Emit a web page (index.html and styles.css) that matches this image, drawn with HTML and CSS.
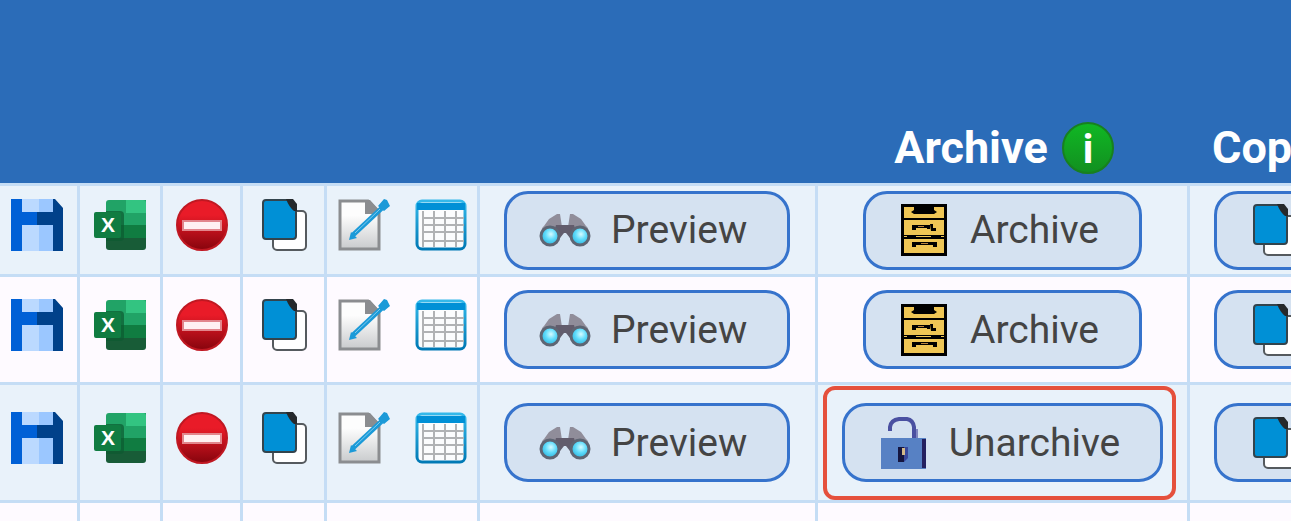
FILE: index.html
```html
<!DOCTYPE html>
<html lang="en">
  <head>
    <meta charset="UTF-8" />
    <meta name="viewport" content="width=device-width, initial-scale=1.0" />
    <title>Archive</title>
    <link rel="stylesheet" href="styles.css">
  </head>
  <body>
    <svg class="icon-defs" aria-hidden="true">
      <defs>
        <linearGradient id="redFill" x1="0" y1="0" x2="0" y2="1">
          <stop offset="0.3" stop-color="#e91b28" />
          <stop offset="1" stop-color="#86040d" />
        </linearGradient>
        <linearGradient id="greenFill" x1="0" y1="0" x2="0" y2="1">
          <stop offset="0" stop-color="#10b824" />
          <stop offset="1" stop-color="#128f20" />
        </linearGradient>
        <linearGradient id="paperFill" x1="0" y1="0" x2="0" y2="1">
          <stop offset="0.3" stop-color="#fdfdfd" />
          <stop offset="1" stop-color="#c9cbcd" />
        </linearGradient>
        <linearGradient id="calendarFill" x1="0" y1="0" x2="0" y2="1">
          <stop offset="0" stop-color="#35b9ea" />
          <stop offset="1" stop-color="#0079b5" />
        </linearGradient>
        <radialGradient id="lensFill" cx="0.55" cy="0.4" r="0.6">
          <stop offset="0" stop-color="#d5fbff" />
          <stop offset="0.5" stop-color="#5fdcfb" />
          <stop offset="1" stop-color="#2fb4dd" />
        </radialGradient>
      </defs>

      <symbol id="save" viewBox="0 0 52 52">
        <path fill="#bbd9ff" d="M11 0h17v52H11z" />
        <path fill="#9bc7ff" d="M28 0h15v52H28z" />
        <path fill="#0060d6" d="M0 0h11v13h15v13H11v26H0z" />
        <path fill="#00418a" d="M26 13h16V0h2l8 9v43H42V26H26z" />
      </symbol>

      <symbol id="excel" viewBox="0 0 52 52">
        <path fill="#21a366" d="M15 1h37v26H12V4q0-3 3-3z" />
        <path fill="#33c481" d="M32 1h17q3 0 3 3v10H32z" />
        <path fill="#107c41" d="M12 26h40v13H12z" />
        <path fill="#185c37" d="M12 39h40v9q0 3-3 3H15q-3 0-3-3z" />
        <path fill="#0d5a30" opacity="0.7" d="M12 12h14q4 0 4 4v22q0 4-4 4H12z" />
        <rect x="0" y="13" width="27" height="26" rx="2" fill="#107c41" />
        <text x="14" y="33" class="excel-letter">X</text>
      </symbol>

      <symbol id="stop" viewBox="0 0 52 52">
        <circle cx="26" cy="26" r="25" fill="url(#redFill)" stroke="#c01822" stroke-width="2" />
        <rect x="7" y="22" width="38" height="9" fill="#fff1f2" stroke="#e2868c" stroke-width="2" />
      </symbol>

      <symbol id="copy" viewBox="0 0 52 52">
        <rect x="15" y="12" width="33" height="39" rx="4" fill="#fff" stroke="#555a5e" stroke-width="2" />
        <path fill="#0090d6" stroke="#33444d" stroke-width="2" d="M8 1h23l7 9v27q0 3-3 3H8q-3 0-3-3V4q0-3 3-3z" />
        <path fill="#25292c" d="M28 0h7l4 5v7h-3q-5-4-8-12z" />
      </symbol>

      <symbol id="edit" viewBox="0 0 52 52">
        <path fill="url(#paperFill)" stroke="#8b8d90" stroke-width="3" d="M2 2h28l11 11v37H2z" />
        <path fill="#8b8d90" d="M27 1h5l10 11v3H27z" />
        <path fill="none" stroke="#1b9ad8" stroke-width="5" d="M15 36L45 8" />
        <path fill="#1b9ad8" d="M11 41l2-8 6 6zM46 0l3 1 3 6-6 5-6-5z" />
        <path stroke="#7fcbee" stroke-width="1" d="M17 34L42 10" />
      </symbol>

      <symbol id="calendar" viewBox="0 0 52 52">
        <rect x="2" y="2" width="48" height="48" rx="5" fill="#fbfcfd" stroke="url(#calendarFill)" stroke-width="3" />
        <path fill="#0090d6" d="M2 4h48v7H2z" />
        <path fill="none" stroke="#b0b2b4" stroke-width="2" d="M8 12v36M19 12v36M30 12v36M41 12v36M9 19h40M9 26h40M9 33h40M9 42h40" />
      </symbol>

      <symbol id="binoculars" viewBox="0 0 52 52">
        <path fill="#908d9a" d="M10 15l8-5h3l2 13v8H2q0-7 3-9zM42 15l-8-5h-3l-2 13v8h21q0-7-3-9z" />
        <path fill="#625c6c" d="M17 21h18l4 13h-8l-4-5h-2l-4 5h-8z" />
        <circle cx="11" cy="32" r="9" fill="url(#lensFill)" stroke="#5e6573" stroke-width="3" />
        <circle cx="41" cy="32" r="9" fill="url(#lensFill)" stroke="#5e6573" stroke-width="3" />
      </symbol>

      <symbol id="cabinet" viewBox="0 0 52 52">
        <path fill="#000" d="M3 0h46v52H3z" />
        <path fill="#efc655" d="M6 3h10v3l-3 2 3 2h20l3-2-3-2V3h10v11H6zM6 16h40v15H6zM6 35h40v14H6z" />
        <path fill="#000" d="M14 21h18v4h-3v-1H18v2h-4zM32 20h3v4h3v3h-5zM14 38h25v5h-4v-2H18v2h-4z" />
        <path fill="#efc655" d="M6 32h3v1H6zM18 32h15v1H18zM43 32h3v1h-3z" />
        <path fill="#b98540" d="M20 22h6v1h-6zM23 39h7v1h-7z" />
      </symbol>

      <symbol id="unlock" viewBox="0 0 52 52">
        <path fill="none" stroke="#4a50a1" stroke-width="4" d="M13 14v-4q1-7 9-8h8q6 1 7 8v12" />
        <path stroke="#7f85bf" stroke-width="2" d="M40 12v10" />
        <path fill="#5781c4" d="M4 21h45v31H4z" />
        <path fill="#24205f" d="M45 22h4v29h-4z" />
        <path fill="#151640" d="M21 30h6v15h-6z" />
        <path fill="#37479c" d="M27 30h4v11l-4 4z" />
        <path fill="#d2b98a" d="M25 31h3v7h-3z" />
      </symbol>

      <symbol id="info" viewBox="0 0 52 52">
        <circle cx="26" cy="26" r="25" fill="url(#greenFill)" stroke="#18801f" stroke-width="2" />
        <text x="26" y="41" class="info-letter">i</text>
      </symbol>
    </svg>

    <table class="reports">
      <colgroup>
        <col class="col-save" />
        <col class="col-excel" />
        <col class="col-delete" />
        <col class="col-copy" />
        <col class="col-edit" />
        <col class="col-preview" />
        <col class="col-archive" />
        <col />
      </colgroup>
      <thead>
        <tr>
          <th></th>
          <th></th>
          <th></th>
          <th></th>
          <th></th>
          <th></th>
          <th>
            <span class="heading">Archive <svg class="icon"><use href="#info" /></svg></span>
          </th>
          <th class="start">Copy</th>
        </tr>
      </thead>
      <tbody>
        <tr class="row-first">
          <td class="tools first"><button class="tool" aria-label="Save"><svg class="icon"><use href="#save" /></svg></button></td>
          <td class="tools"><button class="tool" aria-label="Excel"><svg class="icon"><use href="#excel" /></svg></button></td>
          <td class="tools"><button class="tool" aria-label="Delete"><svg class="icon"><use href="#stop" /></svg></button></td>
          <td class="tools"><button class="tool" aria-label="Copy"><svg class="icon"><use href="#copy" /></svg></button></td>
          <td class="tools">
            <div class="tool-group">
              <button class="tool" aria-label="Edit"><svg class="icon"><use href="#edit" /></svg></button>
              <button class="tool" aria-label="Schedule"><svg class="icon"><use href="#calendar" /></svg></button>
            </div>
          </td>
          <td class="start"><button class="btn"><svg class="icon"><use href="#binoculars" /></svg>Preview</button></td>
          <td><button class="btn"><svg class="icon"><use href="#cabinet" /></svg>Archive</button></td>
          <td class="start"><button class="btn"><svg class="icon"><use href="#copy" /></svg>Copy</button></td>
        </tr>
        <tr class="row-second">
          <td class="tools first"><button class="tool" aria-label="Save"><svg class="icon"><use href="#save" /></svg></button></td>
          <td class="tools"><button class="tool" aria-label="Excel"><svg class="icon"><use href="#excel" /></svg></button></td>
          <td class="tools"><button class="tool" aria-label="Delete"><svg class="icon"><use href="#stop" /></svg></button></td>
          <td class="tools"><button class="tool" aria-label="Copy"><svg class="icon"><use href="#copy" /></svg></button></td>
          <td class="tools">
            <div class="tool-group">
              <button class="tool" aria-label="Edit"><svg class="icon"><use href="#edit" /></svg></button>
              <button class="tool" aria-label="Schedule"><svg class="icon"><use href="#calendar" /></svg></button>
            </div>
          </td>
          <td class="start"><button class="btn"><svg class="icon"><use href="#binoculars" /></svg>Preview</button></td>
          <td><button class="btn"><svg class="icon"><use href="#cabinet" /></svg>Archive</button></td>
          <td class="start"><button class="btn"><svg class="icon"><use href="#copy" /></svg>Copy</button></td>
        </tr>
        <tr class="row-third">
          <td class="tools first"><button class="tool" aria-label="Save"><svg class="icon"><use href="#save" /></svg></button></td>
          <td class="tools"><button class="tool" aria-label="Excel"><svg class="icon"><use href="#excel" /></svg></button></td>
          <td class="tools"><button class="tool" aria-label="Delete"><svg class="icon"><use href="#stop" /></svg></button></td>
          <td class="tools"><button class="tool" aria-label="Copy"><svg class="icon"><use href="#copy" /></svg></button></td>
          <td class="tools">
            <div class="tool-group">
              <button class="tool" aria-label="Edit"><svg class="icon"><use href="#edit" /></svg></button>
              <button class="tool" aria-label="Schedule"><svg class="icon"><use href="#calendar" /></svg></button>
            </div>
          </td>
          <td class="start"><button class="btn"><svg class="icon"><use href="#binoculars" /></svg>Preview</button></td>
          <td class="highlight"><button class="btn"><svg class="icon"><use href="#unlock" /></svg>Unarchive</button></td>
          <td class="start"><button class="btn"><svg class="icon"><use href="#copy" /></svg>Copy</button></td>
        </tr>
        <tr class="row-empty">
          <td></td>
          <td></td>
          <td></td>
          <td></td>
          <td></td>
          <td></td>
          <td></td>
          <td></td>
        </tr>
      </tbody>
    </table>
  </body>
</html>
```
FILE: styles.css
```css
* {
  box-sizing: border-box;
}

body {
  margin: 0;
  font-family: Roboto, "Liberation Sans", sans-serif;
  background-color: #fefaff;
  overflow: hidden;
}

.icon-defs {
  position: absolute;
  width: 0;
  height: 0;
}

.icon {
  display: block;
  flex: none;
  width: 52px;
  height: 52px;
}

.excel-letter {
  font: bold 21px "Liberation Sans", sans-serif;
  fill: #fff;
  text-anchor: middle;
}

.info-letter {
  font: bold 40px Roboto, sans-serif;
  fill: #fff;
  text-anchor: middle;
}

.reports {
  width: 100%;
  table-layout: fixed;
  border-collapse: separate;
  border-spacing: 0;
}

.col-save,
.col-delete {
  width: 80px;
}

.col-excel {
  width: 83px;
}

.col-copy {
  width: 84px;
}

.col-edit {
  width: 153px;
}

.col-preview {
  width: 338px;
}

.col-archive {
  width: 372px;
}

.reports th {
  height: 186px;
  padding: 0 0 9px;
  background-color: #2b6cb8;
  border-bottom: 3px solid #c5ddf5;
  color: #fff;
  font-size: 45px;
  line-height: 52px;
  vertical-align: bottom;
  white-space: nowrap;
  overflow: hidden;
}

.heading {
  display: flex;
  justify-content: center;
  gap: 14px;
}

.reports th.start {
  padding-left: 22px;
  text-align: left;
}

.reports td {
  padding: 0;
  border-right: 3px solid #c5ddf5;
  border-bottom: 3px solid #c5ddf5;
  text-align: center;
  vertical-align: middle;
  overflow: hidden;
}

.reports td:last-child {
  border-right: none;
}

.reports td.start {
  padding-left: 24px;
  text-align: left;
}

.reports td.tools {
  padding-bottom: 10px;
}

.reports td.first {
  padding-right: 4px;
}

.reports tbody tr:nth-child(odd) {
  background-color: #e9f2fa;
}

.row-first {
  height: 91px;
}

.row-second {
  height: 108px;
}

.row-third {
  height: 118px;
}

.row-empty {
  height: 91px;
}

.tool {
  display: block;
  margin: 0 auto;
  padding: 0;
  border: none;
  background: none;
  cursor: pointer;
}

.tool-group {
  display: flex;
  justify-content: center;
  gap: 25px;
}

.tool-group .tool {
  margin: 0;
}

.btn {
  display: inline-flex;
  align-items: center;
  gap: 20px;
  height: 79px;
  padding: 0 40px 0 32px;
  border: 3px solid #3673cc;
  border-radius: 24px;
  background-color: #d5e2f1;
  color: #444;
  font-family: inherit;
  font-size: 39px;
  white-space: nowrap;
  vertical-align: middle;
  cursor: pointer;
}

/* marks the archived report */
.highlight {
  position: relative;
}

.highlight::after {
  content: "";
  position: absolute;
  inset: 1px 11px 0 5px;
  border: 4px solid #e5503c;
  border-radius: 12px;
  pointer-events: none;
}
```
